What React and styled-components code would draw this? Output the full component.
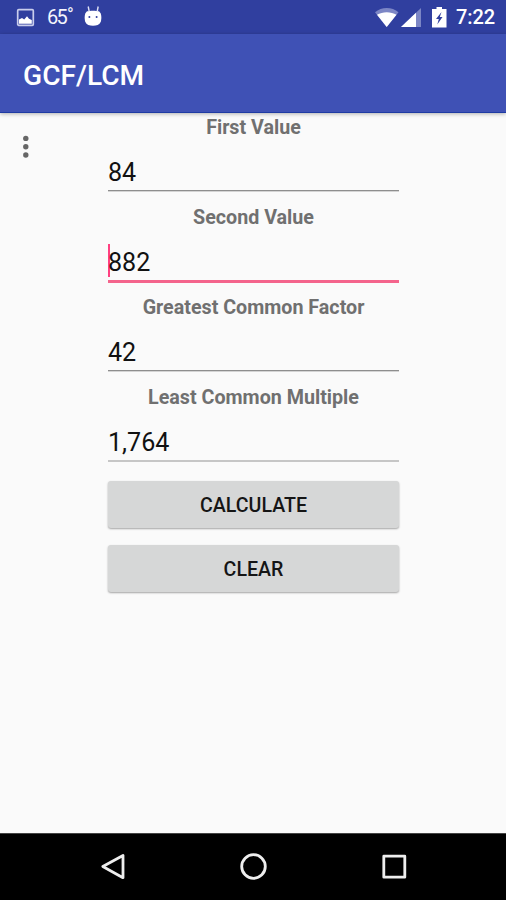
import React, {useState} from 'react';
import styled, {createGlobalStyle, css} from 'styled-components';

const GlobalStyle = createGlobalStyle`
* {
box-sizing: border-box;
}

body {
margin: 0;
background: #fafafa;
font-family: Roboto, "Liberation Sans", sans-serif;
}
`;

const Screen = styled.div`
display: flex;
flex-direction: column;
width: 506px;
height: 900px;
overflow: hidden;
background: #fafafa;
`;

const StatusBar = styled.div`
display: flex;
justify-content: space-between;
flex: none;
height: 34px;
padding: 0 11px 0 16px;
background: #303f9f;
color: #fff;
`;

const StatusGroup = styled.div`
display: flex;
align-items: center;
height: 34px;

svg {
display: block;
flex: none;
}
`;

const Temperature = styled.span`
display: inline-block;
width: 25px;
margin: 0 11px 0 12px;
color: #f4f5fc;
font-size: 20px;
line-height: 35px;
letter-spacing: -1.8px;
white-space: nowrap;
`;

const Degree = styled.span`
margin-left: 1px;
font-size: 18px;
vertical-align: 3px;
line-height: 1;
`;

const Clock = styled.span`
margin-left: 9px;
font-size: 20px;
font-weight: 500;
line-height: 36px;
letter-spacing: -0.1px;
`;

const AppBar = styled.header`
display: flex;
align-items: center;
flex: none;
height: 79px;
padding-left: 23px;
background: #3f51b5;
border-bottom: 1px solid #1f3ba3;
box-shadow: 0 1px 4px rgba(0, 0, 0, 0.3);
`;

const Title = styled.h1`
margin: 5px 0 0;
color: #fff;
font-size: 28.1px;
font-weight: 500;
line-height: 34px;
`;

const Content = styled.main`
display: flex;
flex: 1;
`;

const MenuButton = styled.button`
width: 52px;
height: 68px;
margin-right: 56px;
padding: 0;
border: 0;
background: none;

svg {
display: block;
}
`;

const Form = styled.div`
display: flex;
flex-direction: column;
width: 291px;
`;

const FieldBox = styled.label`
display: block;
height: 90px;
`;

const Label = styled.span`
display: block;
height: 28px;
margin: 0 -10px;
color: #707070;
font-size: 19.7px;
font-weight: 700;
line-height: 29px;
text-align: center;
white-space: nowrap;
`;

const InputLine = styled.div`
display: flex;
align-items: flex-start;
height: 50px;
padding-top: 17px;
border-bottom: 1px solid #8e8e8e;
box-shadow: 0 1px 0 rgba(0, 0, 0, 0.15);

${({$light}) => (
    $light && css`
height: 51px;
border-bottom: 2px solid #c6c6c6;
box-shadow: none;
`)}

${({$focused}) => (
    $focused && css`
height: 52px;
border-bottom: 3px solid #f4648c;
box-shadow: none;
`)}
`;

const Caret = styled.span`
flex: none;
width: 2px;
height: 33px;
margin: -4px -2px 0 0;
background: #ff4081;
`;

const Input = styled.input`
width: 100%;
min-width: 0;
height: 30px;
padding: 0;
border: 0;
outline: 0;
background: transparent;
color: #111;
font-family: inherit;
font-size: 25.1px;
line-height: 30px;
`;

const Button = styled.button`
height: 47px;
margin: 8px 0 9px;
padding: 2px 0 0;
border: 0;
border-radius: 3px;
background: #d6d7d7;
box-shadow: 0 1px 2px rgba(0, 0, 0, 0.35);
color: #151515;
font-family: inherit;
font-size: 19.6px;
font-weight: 500;
line-height: 45px;
`;

const NavBar = styled.nav`
display: flex;
justify-content: center;
align-items: center;
gap: 112.5px;
flex: none;
height: 67px;
background: #000;
border-top: 1px solid #444;

svg {
display: block;
}
`;

const PictureIcon = () => (
    <svg width="19" height="34" viewBox="0 0 19 34">
        <rect x="1.700" y="9.700" width="15.600" height="15.600" rx="1" fill="none" stroke="#c9cdec" strokeWidth="1.700"/>
        <path d="M3 23.800V19.500l3-1.500 2.200 1.500 2.800-3.200 2 2.400 2.800 1.300v3.800z" fill="#fff"/>
    </svg>
);

const RobotIcon = () => (
    <svg width="20" height="34" viewBox="0 0 20 34">
        <path d="M5.200 6.500l1 5M15.200 6.500L14.200 11.500" stroke="#dfe2f5" strokeWidth="1.400"/>
        <path d="M4 11.300c3-.9 9-.9 12 0 2.600 2.200 2.800 6.500 1.800 10.500C16.500 24.800 13.500 25.800 10 25.800S3.500 24.800 2.200 21.800C1.200 17.800 1.400 13.500 4 11.300z" fill="#fff"/>
        <circle cx="6.400" cy="17" r="1" fill="#303f9f"/>
        <circle cx="13.600" cy="17" r="1" fill="#303f9f"/>
    </svg>
);

const WifiIcon = () => (
    <svg width="25" height="34" viewBox="0 0 25 34">
        <path d="M0 12.300C6.500 6.500 17 6.500 23.500 12.300L11.700 27z" fill="#7c86c5"/>
        <path d="M2 14.800C7.500 11.300 16 11.300 21.500 14.800L11.700 27z" fill="#fff"/>
    </svg>
);

const SignalIcon = () => (
    <svg width="22" height="34" viewBox="0 0 22 34">
        <path d="M1 27L21 8v19z" fill="#7c86c5"/>
        <path d="M1 27L16 12.700V27z" fill="#fff"/>
    </svg>
);

const BatteryShape = styled.svg`
margin-left: 9px;
`;

const BatteryIcon = () => (
    <BatteryShape width="16" height="34" viewBox="0 0 16 34">
        <path d="M5.500 7h5.500v2h4.500v18.500H1V9h4.500z" fill="#fff"/>
        <path d="M10.500 12L5 19h2.800l-1.500 5.500L11.500 17H8.800z" fill="#303f9f"/>
    </BatteryShape>
);

const MoreIcon = () => (
    <svg width="52" height="68" viewBox="0 0 52 68">
        <g fill="#666">
            <circle cx="25.800" cy="25.400" r="2.700"/>
            <circle cx="25.800" cy="33.700" r="2.700"/>
            <circle cx="25.800" cy="42" r="2.700"/>
        </g>
    </svg>
);

const NavIcon = ({children}) => (
    <svg width="28" height="28" viewBox="0 0 28 28" fill="none" stroke="#eee" strokeWidth="2.800" strokeLinejoin="round">
        {children}
    </svg>
);

const Field = ({label, value, focused, light, onChange}) => (
    <FieldBox>
        <Label>{label}</Label>
        <InputLine $focused={focused} $light={light}>
            {focused && <Caret/>}
            <Input value={value} readOnly={!onChange} onChange={onChange}/>
        </InputLine>
    </FieldBox>
);

const getGcf = (a, b) => (b ? getGcf(b, a % b) : a);

const App = () => {
    const [first, setFirst] = useState('84');
    const [second, setSecond] = useState('882');
    const [result, setResult] = useState({gcf: '42', lcm: '1,764'});

    const calculate = () => {
        const a = Number(first);
        const b = Number(second);
        if (!a || !b) return;
        const gcf = getGcf(a, b);
        setResult({gcf: gcf.toLocaleString('en-US'), lcm: (a * b / gcf).toLocaleString('en-US')});
    };

    const clear = () => {
        setFirst('');
        setSecond('');
        setResult({gcf: '', lcm: ''});
    };

    return (
        <>
            <GlobalStyle/>
            <Screen>
                <StatusBar>
                    <StatusGroup>
                        <PictureIcon/>
                        <Temperature>65<Degree>°</Degree></Temperature>
                        <RobotIcon/>
                    </StatusGroup>
                    <StatusGroup>
                        <WifiIcon/>
                        <SignalIcon/>
                        <BatteryIcon/>
                        <Clock>7:22</Clock>
                    </StatusGroup>
                </StatusBar>
                <AppBar>
                    <Title>GCF/LCM</Title>
                </AppBar>
                <Content>
                    <MenuButton aria-label="More"><MoreIcon/></MenuButton>
                    <Form>
                        <Field label="First Value" value={first} onChange={e => setFirst(e.target.value)}/>
                        <Field label="Second Value" value={second} focused onChange={e => setSecond(e.target.value)}/>
                        <Field label="Greatest Common Factor" value={result.gcf}/>
                        <Field label="Least Common Multiple" value={result.lcm} light/>
                        <Button onClick={calculate}>CALCULATE</Button>
                        <Button onClick={clear}>CLEAR</Button>
                    </Form>
                </Content>
                <NavBar>
                    <NavIcon><path d="M3.800 13.500L24 2.500v22.200z"/></NavIcon>
                    <NavIcon><circle cx="14.500" cy="13.500" r="11.800"/></NavIcon>
                    <NavIcon><rect x="3.800" y="3.200" width="21" height="21"/></NavIcon>
                </NavBar>
            </Screen>
        </>
    );
};

export default App;
